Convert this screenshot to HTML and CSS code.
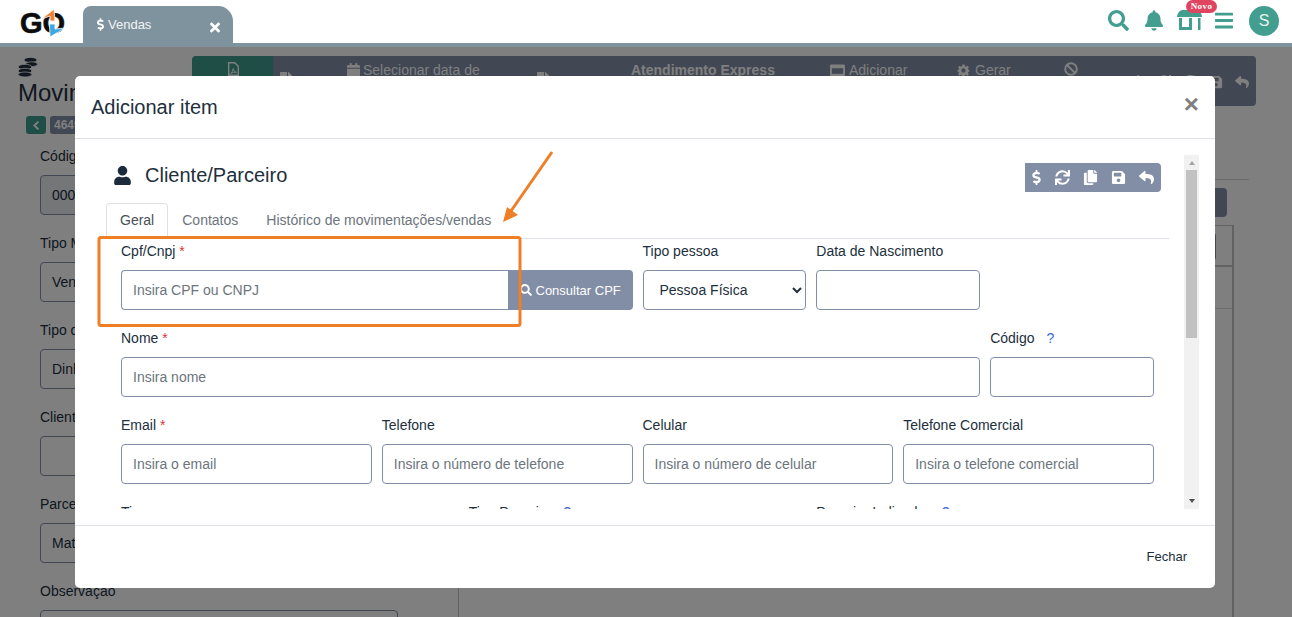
FILE: index.html
```html
<!DOCTYPE html>
<html lang="pt-BR">
<head>
<meta charset="utf-8">
<title>Vendas</title>
<link rel="stylesheet" href="styles.css">
</head>
<body>
<svg class="defs" width="0" height="0" aria-hidden="true">
  <symbol id="i-search" viewBox="0 0 512 512"><path d="M505 442.7L405.3 343c-4.5-4.5-10.6-7-17-7H372c27.6-35.3 44-79.7 44-128C416 93.1 322.9 0 208 0S0 93.1 0 208s93.1 208 208 208c48.3 0 92.7-16.4 128-44v16.3c0 6.4 2.5 12.5 7 17l99.7 99.7c9.4 9.4 24.6 9.4 33.9 0l28.3-28.3c9.4-9.4 9.4-24.6.1-34zM208 336c-70.7 0-128-57.2-128-128 0-70.7 57.2-128 128-128 70.7 0 128 57.2 128 128 0 70.7-57.2 128-128 128z"/></symbol>
  <symbol id="i-bell" viewBox="0 0 448 512"><path d="M224 512c35.32 0 63.97-28.65 63.97-64H160.03c0 35.35 28.65 64 63.97 64zm215.39-149.71c-19.32-20.76-55.47-51.99-55.47-154.29 0-77.7-54.48-139.9-127.94-155.16V32c0-17.67-14.32-32-31.98-32s-31.98 14.33-31.98 32v20.84C118.56 68.1 64.08 130.3 64.08 208c0 102.3-36.15 133.53-55.47 154.29-6 6.45-8.66 14.16-8.61 21.71.11 16.4 12.98 32 32.1 32h383.8c19.12 0 32-15.6 32.1-32 .05-7.55-2.61-15.27-8.61-21.71z"/></symbol>
  <symbol id="i-user" viewBox="0 0 448 512"><path d="M224 256c70.7 0 128-57.3 128-128S294.7 0 224 0 96 57.3 96 128s57.3 128 128 128zm89.6 32h-16.7c-22.2 10.2-46.9 16-72.9 16s-50.6-5.8-72.9-16h-16.7C60.2 288 0 348.2 0 422.4V464c0 26.5 21.5 48 48 48h352c26.5 0 48-21.5 48-48v-41.6c0-74.2-60.2-134.4-134.4-134.4z"/></symbol>
  <symbol id="i-times" viewBox="0 0 352 512"><path d="M242.72 256l100.07-100.07c12.28-12.28 12.28-32.19 0-44.48l-22.24-22.24c-12.28-12.28-32.19-12.28-44.48 0L176 189.28 75.93 89.21c-12.28-12.28-32.19-12.28-44.48 0L9.21 111.45c-12.28 12.28-12.28 32.19 0 44.48L109.28 256 9.21 356.07c-12.28 12.28-12.28 32.19 0 44.48l22.24 22.24c12.28 12.28 32.2 12.28 44.48 0L176 322.72l100.07 100.07c12.28 12.28 32.2 12.28 44.48 0l22.24-22.24c12.28-12.28 12.28-32.19 0-44.48L242.72 256z"/></symbol>
  <symbol id="i-sync" viewBox="0 0 512 512"><path d="M440.65 12.57l4 82.77A247.16 247.16 0 0 0 255.83 8C134.73 8 33.91 94.92 12.29 209.82A12 12 0 0 0 24.09 224h49.05a12 12 0 0 0 11.67-9.26 175.91 175.91 0 0 1 317-56.94l-101.46-4.86a12 12 0 0 0-12.57 12v47.41a12 12 0 0 0 12 12H500a12 12 0 0 0 12-12V12a12 12 0 0 0-12-12h-47.37a12 12 0 0 0-11.98 12.57zM255.83 432a175.61 175.61 0 0 1-146-77.8l101.8 4.87a12 12 0 0 0 12.57-12v-47.4a12 12 0 0 0-12-12H12a12 12 0 0 0-12 12V500a12 12 0 0 0 12 12h47.35a12 12 0 0 0 12-12.6l-4.15-82.57A247.17 247.17 0 0 0 255.83 504c121.11 0 221.93-86.92 243.55-201.82a12 12 0 0 0-11.8-14.18h-49.05a12 12 0 0 0-11.67 9.26A175.86 175.86 0 0 1 255.83 432z"/></symbol>
  <symbol id="i-copy" viewBox="0 0 448 512"><path d="M320 448v40c0 13.255-10.745 24-24 24H24c-13.255 0-24-10.745-24-24V120c0-13.255 10.745-24 24-24h72v296c0 30.879 25.121 56 56 56h168zm0-344V0H152c-13.255 0-24 10.745-24 24v368c0 13.255 10.745 24 24 24h272c13.255 0 24-10.745 24-24V128H344c-13.2 0-24-10.8-24-24zm120.971-31.029L375.029 7.029A24 24 0 0 0 358.059 0H352v96h96v-6.059a24 24 0 0 0-7.029-16.97z"/></symbol>
  <symbol id="i-save" viewBox="0 0 448 512"><path d="M433.941 129.941l-83.882-83.882A48 48 0 0 0 316.118 32H48C21.49 32 0 53.49 0 80v352c0 26.51 21.49 48 48 48h352c26.51 0 48-21.49 48-48V163.882a48 48 0 0 0-14.059-33.941zM224 416c-35.346 0-64-28.654-64-64 0-35.346 28.654-64 64-64s64 28.654 64 64c0 35.346-28.654 64-64 64zm96-304.52V212c0 6.627-5.373 12-12 12H76c-6.627 0-12-5.373-12-12V108c0-6.627 5.373-12 12-12h228.52c3.183 0 6.235 1.264 8.485 3.515l3.48 3.48A11.996 11.996 0 0 1 320 111.48z"/></symbol>
  <symbol id="i-reply" viewBox="0 0 512 512"><path d="M8.309 189.836L184.313 37.851C199.719 24.546 224 35.347 224 56.015v80.053c160.629 1.839 288 34.032 288 186.258 0 61.441-39.581 122.309-83.333 154.132-13.653 9.931-33.111-2.533-28.077-18.631 45.344-145.012-21.507-183.51-176.59-185.742V360c0 20.7-24.3 31.453-39.687 18.164l-176.004-152c-11.071-9.562-11.086-26.753 0-36.328z"/></symbol>
  <symbol id="i-dollar" viewBox="0 0 288 512"><path d="M209.2 233.4l-108-31.6C88.7 198.2 80 186.5 80 173.5c0-16.3 13.2-29.5 29.5-29.5h66.3c12.2 0 24.2 3.7 34.2 10.5 6.1 4.1 14.3 3.1 19.5-2l34.8-34c7.1-6.9 6.1-18.4-1.8-24.5C238 74.8 207.4 64.1 176 64V16c0-8.8-7.2-16-16-16h-32c-8.8 0-16 7.2-16 16v48h-2.5C45.8 64-5.4 118.7.5 183.6c4.2 46.1 39.4 83.6 83.8 96.6l102.5 30c12.5 3.7 21.2 15.3 21.2 28.3 0 16.3-13.2 29.5-29.5 29.5h-66.3C100 368 88 364.3 78 357.5c-6.1-4.1-14.3-3.1-19.5 2l-34.8 34c-7.1 6.9-6.1 18.4 1.8 24.5 24.5 19.2 55.1 29.9 86.5 30v48c0 8.8 7.2 16 16 16h32c8.8 0 16-7.2 16-16v-48.2c46.6-.9 90.3-28.6 105.7-72.7 21.5-61.6-14.6-124.8-72.5-141.7z"/></symbol>
  <symbol id="i-bars" viewBox="0 0 448 512"><path d="M16 132h416c8.837 0 16-7.163 16-16V76c0-8.837-7.163-16-16-16H16C7.163 60 0 67.163 0 76v40c0 8.837 7.163 16 16 16zm0 160h416c8.837 0 16-7.163 16-16v-40c0-8.837-7.163-16-16-16H16c-8.837 0-16 7.163-16 16v40c0 8.837 7.163 16 16 16zm0 160h416c8.837 0 16-7.163 16-16v-40c0-8.837-7.163-16-16-16H16c-8.837 0-16 7.163-16 16v40c0 8.837 7.163 16 16 16z"/></symbol>
  <symbol id="i-file" viewBox="0 0 384 512"><path d="M224 136V0H24C10.700 0 0 10.700 0 24v464c0 13.300 10.700 24 24 24h336c13.300 0 24-10.700 24-24V160H248c-13.200 0-24-10.800-24-24zM384 121.900V128H256V0h6.100c6.400 0 12.500 2.500 17 7l97.900 98c4.500 4.500 7 10.600 7 16.900z"/></symbol>
  <symbol id="i-calendar" viewBox="0 0 448 512"><path d="M0 464c0 26.500 21.500 48 48 48h352c26.500 0 48-21.500 48-48V192H0v272zM400 64h-48V16c0-8.800-7.200-16-16-16h-32c-8.800 0-16 7.200-16 16v48H160V16c0-8.800-7.200-16-16-16h-32c-8.800 0-16 7.200-16 16v48H48C21.500 64 0 85.500 0 112v48h448v-48c0-26.500-21.500-48-48-48z"/></symbol>
  <symbol id="i-window" viewBox="0 0 512 512"><path d="M464 48H48C21.500 48 0 69.500 0 96v320c0 26.500 21.500 48 48 48h416c26.500 0 48-21.500 48-48V96c0-26.500-21.500-48-48-48zM448 176v192H64V176h384z" fill-rule="evenodd"/></symbol>
  <symbol id="i-cog" viewBox="0 0 24 24"><path d="M10 1h4l.6 3.200 1.900.8L19.200 3.200 22 6l-1.800 2.700.8 1.900L23 11v3l-2 .6-.8 1.900L22 19l-2.800 2.800-2.700-1.800-1.900.8L14 23h-4l-.6-2.200-1.900-.8L4.800 21.800 2 19l1.800-2.500-.8-1.900L1 14v-3l2-.4.8-1.900L2 6l2.800-2.800L7.500 5l1.900-.8L10 1zm2 7a4 4 0 1 0 0 8 4 4 0 0 0 0-8z" fill-rule="evenodd"/></symbol>
</svg>

<header class="topbar">
  <div class="logo">
    <span class="logo-text">GO</span>
    <svg class="logo-marks" viewBox="0 0 46 30" width="46" height="30" aria-hidden="true">
      <polygon class="mark-orange" points="22,10 34,0 35,12 30,12 30,7"/>
      <polygon class="mark-blue" points="29.500,15 35,15 35,20 45,19 30,28"/>
    </svg>
  </div>
  <nav class="tab-strip">
    <div class="app-tab">
      <svg class="ic ic-tab-dollar"><use href="#i-dollar"/></svg>
      <span class="app-tab-label">Vendas</span>
      <svg class="ic ic-tab-close"><use href="#i-times"/></svg>
    </div>
  </nav>
  <div class="top-actions">
    <svg class="ic ic-search"><use href="#i-search"/></svg>
    <svg class="ic ic-bell"><use href="#i-bell"/></svg>
    <div class="store">
      <svg class="store-icon" viewBox="0 0 25 21" width="25" height="21" aria-hidden="true">
        <path class="store-fill" d="M5 0h15c3 1 5 4 5 7H0c0-3 2-6 5-7z"/>
        <path class="store-fill" d="M2 8h3v9h7V8h3v12H2z"/>
        <rect class="store-fill" x="21" y="8" width="2.500" height="12"/>
      </svg>
      <span class="store-badge">Novo</span>
    </div>
    <svg class="ic ic-bars"><use href="#i-bars"/></svg>
    <span class="avatar">S</span>
  </div>
</header>
<div class="top-stripe"></div>

<main class="page">
  <div class="page-head">
    <div class="title-block">
      <svg class="coins" viewBox="0 0 20 20" width="20" height="20" aria-hidden="true">
        <ellipse class="coin" cx="12.500" cy="3" rx="6.500" ry="2.600"/>
        <ellipse class="coin" cx="13.500" cy="7.200" rx="6" ry="2.400"/>
        <ellipse class="coin" cx="7" cy="10" rx="6.800" ry="2.700"/>
        <ellipse class="coin" cx="7" cy="14" rx="6.800" ry="2.700"/>
        <ellipse class="coin" cx="7" cy="17.500" rx="6.800" ry="2.500"/>
      </svg>
      <h1 class="page-title">Movimentações</h1>
      <div class="crumbs">
        <span class="back-btn">
          <svg class="chev" viewBox="0 0 10 14" width="8" height="11" aria-hidden="true"><polyline points="8,2 3,7 8,12"/></svg>
        </span>
        <span class="crumb-badge">4649</span>
      </div>
    </div>
    <div class="toolbar">
      <div class="tb-green">
        <svg class="pdf" viewBox="0 0 11 14" width="11" height="14" aria-hidden="true">
          <path class="pdf-page" d="M.7.7h6l3.600 3.600v9H.7z"/>
          <path class="pdf-mark" d="M2.500 11.500C4 10.500 5 8.500 5.200 6.500 5.500 8.500 6.500 9.800 8.500 10.300 6.500 10 4 10.500 2.500 11.500z"/>
        </svg>
      </div>
      <div class="tb-item tb-file"><svg class="ic ic-low"><use href="#i-file"/></svg></div>
      <div class="tb-item tb-date"><svg class="ic ic-cal"><use href="#i-calendar"/></svg><span class="tb-wrap">Selecionar data de venda</span></div>
      <div class="tb-item tb-print"><svg class="ic ic-low"><use href="#i-file"/></svg></div>
      <div class="tb-item tb-express"><strong>Atendimento Express</strong></div>
      <div class="tb-item tb-add"><svg class="ic ic-win"><use href="#i-window"/></svg><span>Adicionar</span></div>
      <div class="tb-item tb-gen"><svg class="ic ic-cal"><use href="#i-cog"/></svg><span>Gerar</span></div>
      <div class="tb-item tb-ban">
        <svg class="ban" viewBox="0 0 14 14" width="14" height="14" aria-hidden="true"><circle cx="7" cy="7" r="5.800"/><line x1="3" y1="3" x2="11" y2="11"/></svg>
      </div>
      <div class="tb-right">
        <svg class="ic ic-tb"><use href="#i-dollar"/></svg>
        <svg class="ic ic-tb"><use href="#i-sync"/></svg>
        <svg class="ic ic-tb"><use href="#i-copy"/></svg>
        <svg class="ic ic-tb"><use href="#i-save"/></svg>
        <svg class="ic ic-tb"><use href="#i-reply"/></svg>
      </div>
    </div>
  </div>

  <div class="page-main">
    <div class="left-col">
      <div class="bg-field"><div class="bg-label">Código</div><div class="bg-input bg-disabled">0004649</div></div>
      <div class="bg-field"><div class="bg-label">Tipo Movimentação</div><div class="bg-input">Venda</div></div>
      <div class="bg-field"><div class="bg-label">Tipo de pagamento</div><div class="bg-input">Dinheiro</div></div>
      <div class="bg-field"><div class="bg-label">Cliente</div><div class="bg-input"></div></div>
      <div class="bg-field"><div class="bg-label">Parceiro</div><div class="bg-input">Matriz</div></div>
      <div class="bg-field"><div class="bg-label">Observação</div><div class="bg-input bg-text"></div></div>
    </div>
    <div class="right-col">
      <div class="bg-rule"></div>
      <div class="bg-btn-row"><span class="bg-btn"></span></div>
      <div class="bg-table">
        <div class="bg-row bg-row-head"><span class="bg-cell-btn"></span></div>
        <div class="bg-row bg-row-body"></div>
        <div class="bg-row-rest"></div>
      </div>
    </div>
  </div>
</main>

<div class="overlay">
  <section class="modal">
    <div class="modal-head">
      <h2 class="modal-title">Adicionar item</h2>
      <span class="modal-close">×</span>
    </div>
    <div class="modal-body">
      <div class="scroller">
        <div class="scroll-view">
          <div class="scroll-inner">
            <div class="card-head">
              <svg class="ic ic-user"><use href="#i-user"/></svg>
              <h3 class="card-title">Cliente/Parceiro</h3>
              <div class="card-tools">
                <svg class="ic ic-tool ic-tool-d"><use href="#i-dollar"/></svg>
                <svg class="ic ic-tool"><use href="#i-sync"/></svg>
                <svg class="ic ic-tool"><use href="#i-copy"/></svg>
                <svg class="ic ic-tool"><use href="#i-save"/></svg>
                <svg class="ic ic-tool"><use href="#i-reply"/></svg>
              </div>
            </div>
            <div class="tabs">
              <span class="tab tab-active">Geral</span>
              <span class="tab">Contatos</span>
              <span class="tab">Histórico de movimentações/vendas</span>
            </div>
            <form class="form-grid">
              <div class="field span-6">
                <label class="label">Cpf/Cnpj <b class="req">*</b></label>
                <div class="input-group">
                  <input class="input input-joined" placeholder="Insira CPF ou CNPJ">
                  <button type="button" class="btn-consult"><svg class="ic ic-btn"><use href="#i-search"/></svg>Consultar CPF</button>
                </div>
              </div>
              <div class="field span-2">
                <label class="label">Tipo pessoa</label>
                <select class="input select"><option>Pessoa Física</option></select>
              </div>
              <div class="field span-2">
                <label class="label">Data de Nascimento</label>
                <input class="input">
              </div>
              <div class="field span-2"></div>

              <div class="field span-10">
                <label class="label">Nome <b class="req">*</b></label>
                <input class="input" placeholder="Insira nome">
              </div>
              <div class="field span-2">
                <label class="label">Código <span class="help">?</span></label>
                <input class="input">
              </div>

              <div class="field span-3">
                <label class="label">Email <b class="req">*</b></label>
                <input class="input" placeholder="Insira o email">
              </div>
              <div class="field span-3">
                <label class="label">Telefone</label>
                <input class="input" placeholder="Insira o número de telefone">
              </div>
              <div class="field span-3">
                <label class="label">Celular</label>
                <input class="input" placeholder="Insira o número de celular">
              </div>
              <div class="field span-3">
                <label class="label">Telefone Comercial</label>
                <input class="input" placeholder="Insira o telefone comercial">
              </div>

              <div class="field span-4">
                <label class="label">Tipo</label>
                <input class="input">
              </div>
              <div class="field span-4">
                <label class="label">Tipo Parceiro <span class="help">?</span></label>
                <input class="input">
              </div>
              <div class="field span-4">
                <label class="label">Parceiro Indicador <span class="help">?</span></label>
                <input class="input">
              </div>
            </form>
          </div>
        </div>
        <div class="scrollbar">
          <span class="sb-up"></span>
          <span class="sb-thumb"></span>
          <span class="sb-down"></span>
        </div>
      </div>
    </div>
    <div class="modal-foot"><span class="foot-btn">Fechar</span></div>
  </section>
</div>

<svg class="annotation" viewBox="0 0 1292 617" width="1292" height="617" aria-hidden="true">
  <rect class="anno-box" x="99" y="237.500" width="421" height="88" rx="2"/>
  <line class="anno-line" x1="552" y1="152" x2="511" y2="211"/>
  <polygon class="anno-head" points="503,222 507,207 518,215"/>
</svg>
</body>
</html>
```
FILE: styles.css
```css
* { box-sizing: border-box; }
html, body { margin: 0; height: 100%; overflow: hidden; }
body {
  font-family: "Liberation Sans", Arial, sans-serif;
  font-size: 14px;
  line-height: 21px;
  color: #212f3d;
  background: #fff;
  position: relative;
}
.defs { position: absolute; }
.ic { display: block; fill: currentColor; flex: none; }

/* top bar */
.topbar {
  height: 43px;
  display: flex;
  align-items: flex-start;
  background: #fff;
  position: relative;
  z-index: 3;
}
.logo { width: 83px; height: 43px; padding: 9px 0 0 20px; position: relative; }
.logo-text {
  display: block;
  font-size: 29px;
  line-height: 28px;
  font-weight: 700;
  color: #0c0c0c;
  -webkit-text-stroke: .6px #0c0c0c;
}
.logo-marks { position: absolute; left: 20px; top: 9px; }
.mark-orange { fill: #ee7f33; stroke: #fff; stroke-width: .8; }
.mark-blue { fill: #3ca7e0; stroke: #fff; stroke-width: .8; }
.tab-strip { margin-top: 6px; }
.app-tab {
  width: 150px;
  height: 37px;
  background: #7f939e;
  border-radius: 8px 15px 0 0;
  color: #f1f4f6;
  display: flex;
  align-items: center;
  font-size: 13px;
  padding: 0 13px 0 14px;
}
.ic-tab-dollar { width: 7px; height: 13px; color: #fff; margin-right: 4px; }
.app-tab-label { flex: 1; }
.ic-tab-close { width: 10px; height: 15px; color: #fff; margin-top: 5px; }
.top-actions {
  margin-left: auto;
  display: flex;
  align-items: flex-start;
  padding-right: 13px;
}
.ic-search { width: 21px; height: 21px; color: #429e8f; margin: 10px 16px 0 0; }
.ic-bell { width: 18px; height: 21px; color: #429e8f; margin: 10px 14px 0 0; }
.store { width: 38px; height: 43px; position: relative; }
.store-icon { position: absolute; left: 0; top: 10px; }
.store-fill { fill: #429e8f; }
.store-badge {
  position: absolute;
  left: 9px;
  top: 0;
  width: 31px;
  height: 13px;
  border-radius: 7px;
  background: #e0455f;
  color: #fff;
  font-family: "Liberation Serif", serif;
  font-size: 9px;
  font-weight: 700;
  line-height: 12px;
  letter-spacing: .4px;
  text-align: center;
}
.ic-bars { width: 18px; height: 21px; color: #429e8f; margin: 10px 16px 0 0; }
.avatar {
  width: 30px;
  height: 30px;
  margin-top: 6px;
  border-radius: 50%;
  background: #429e8f;
  color: #e8f3f1;
  font-size: 16px;
  line-height: 30px;
  text-align: center;
}
.top-stripe { height: 4px; background: #7f939e; position: relative; z-index: 3; }

/* page behind the dialog */
.page { height: 570px; overflow: hidden; }
.page-head { display: flex; align-items: flex-start; padding: 9px 36px 0 18px; height: 87px; }
.title-block { width: 174px; flex: none; padding-top: 1px; }
.coins { display: block; }
.coin { fill: #212f3d; stroke: #fff; stroke-width: .8; }
.page-title { margin: 1px 0 0; font-size: 24px; line-height: 29px; font-weight: 400; white-space: nowrap; }
.crumbs { display: flex; gap: 4px; padding: 9px 0 0 8px; }
.back-btn {
  width: 20px; height: 18px; border-radius: 3px; background: #3e9c8f;
  display: flex; align-items: center; justify-content: center;
}
.chev { fill: none; stroke: #fff; stroke-width: 2.500; }
.crumb-badge {
  width: 60px; height: 18px; border-radius: 3px; background: #828ea6;
  color: #fff; font-size: 12px; font-weight: 700; line-height: 18px; padding-left: 4px;
}
.toolbar {
  flex: 1;
  height: 50px;
  background: #828ea6;
  border-radius: 4px;
  display: flex;
  overflow: hidden;
  color: #fff;
}
.tb-green { width: 81px; background: #3e9c8f; padding: 6px 0 0 36px; border-radius: 4px 0 0 4px; }
.pdf { display: block; }
.pdf-page { fill: none; stroke: #fff; stroke-width: 1.400; }
.pdf-mark { fill: none; stroke: #fff; stroke-width: 1; }
.tb-item { display: flex; gap: 4px; padding-top: 4px; white-space: nowrap; }
.ic-cal { width: 13px; height: 15px; margin-top: 3px; }
.ic-win { width: 15px; height: 15px; margin-top: 3px; }
.ic-low { width: 12px; height: 16px; margin-top: 12px; }
.tb-wrap { white-space: normal; width: 122px; }
.tb-file { width: 74px; padding-left: 7px; }
.tb-date { width: 190px; gap: 3px; }
.tb-print { width: 94px; }
.tb-express { width: 199px; }
.tb-add { width: 127px; }
.tb-gen { width: 107px; gap: 5px; }
.tb-ban { width: 60px; padding-top: 6px; }
.ban { fill: none; stroke: #fff; stroke-width: 2; }
.tb-right { flex: 1; display: flex; justify-content: flex-end; gap: 12px; padding: 19px 7px 0 0; }
.ic-tb { width: 14px; height: 14px; }

.page-main { display: flex; padding: 0 0 0 40px; }
.left-col { width: 358px; flex: none; padding-top: 12px; display: flex; flex-direction: column; gap: 18px; }
.bg-label { margin-bottom: 8px; white-space: nowrap; }
.bg-input {
  height: 40px;
  border: 1px solid #828ea6;
  border-radius: 4px;
  background: #fff;
  padding: 0 11px;
  line-height: 38px;
}
.bg-disabled { background: #e9ecef; }
.bg-text { height: 80px; }
.right-col { width: 776px; flex: none; margin-left: 60px; padding-top: 45px; }
.bg-rule { height: 1px; background: #d6d6d6; margin-right: -15px; }
.bg-btn-row { display: flex; justify-content: flex-end; padding: 8px 7px 8px 0; }
.bg-btn { width: 80px; height: 29px; background: #828ea6; border-radius: 4px; }
.bg-table { border: 2px solid #c4c4c4; border-width: 1px 2px 0 1px; height: 500px; }
.bg-row { height: 41px; border-bottom: 2px solid #c4c4c4; display: flex; justify-content: flex-end; }
.bg-row-body { height: 42px; border-bottom: 1px solid #dcdcdc; }
.bg-cell-btn { width: 60px; height: 27px; margin: 7px 16px 0 0; background: #828ea6; border-radius: 3px; }

/* dialog */
.overlay {
  position: absolute;
  left: 0; right: 0; top: 47px; bottom: 0;
  background: rgba(0, 0, 0, .5);
  padding: 29px 0 0 75px;
  z-index: 2;
}
.modal {
  width: 1140px;
  height: 512px;
  background: #fff;
  border-radius: 5px;
  display: flex;
  flex-direction: column;
}
.modal-head {
  height: 63px;
  flex: none;
  border-bottom: 1px solid #dee2e6;
  display: flex;
  align-items: center;
  justify-content: space-between;
  padding: 0 16px 0 16px;
}
.modal-title { margin: 0 0 1px; font-size: 20px; line-height: 30px; font-weight: 400; color: #212f3d; }
.modal-close { font-size: 26px; line-height: 26px; font-weight: 700; color: #7f7f7f; margin-bottom: 7px; }
.modal-body { height: 386px; flex: none; padding: 16px; }
.scroller { height: 354px; display: flex; }
.scroll-view { flex: 1; min-width: 0; overflow: hidden; }
.scroll-inner { padding: 8px 15px 0; }
.scrollbar {
  width: 15px;
  flex: none;
  background: #f1f1f1;
  display: flex;
  flex-direction: column;
  align-items: center;
}
.sb-up {
  margin-top: 6px;
  border-style: solid;
  border-width: 0 3.5px 4px;
  border-color: transparent transparent #a3a3a3;
}
.sb-thumb { width: 11px; height: 168px; margin-top: 5px; background: #c1c1c1; }
.sb-down {
  margin-top: auto;
  margin-bottom: 6px;
  border-style: solid;
  border-width: 4px 3.5px 0;
  border-color: #505050 transparent transparent;
}
.card-head { display: flex; align-items: center; height: 29px; padding-left: 8px; }
.ic-user { width: 17px; height: 19px; color: #1c2b39; margin: -5px 14px 0 0; }
.card-title { margin: -5px 0 0; font-size: 20px; line-height: 24px; font-weight: 400; flex: 1; }
.card-tools {
  width: 136px;
  height: 29px;
  margin-right: 8px;
  background: #828ea6;
  border-radius: 0 4px 4px 0;
  display: flex;
  align-items: center;
  gap: 13px;
  padding-left: 4px;
  color: #fff;
}
.ic-tool { width: 15px; height: 15px; }
.ic-tool-d { margin-right: -2px; }
.tabs { display: flex; margin-top: 11px; height: 36px; border-bottom: 1px solid #dee2e6; }
.tab { padding: 6px 13px 0; height: 36px; border: 1px solid transparent; color: #6c757d; white-space: nowrap; }
.tab-active { color: #495057; background: #fff; border-color: #dee2e6 #dee2e6 #fff; border-radius: 4px 4px 0 0; }

.form-grid {
  display: grid;
  grid-template-columns: repeat(12, 1fr);
  column-gap: 10px;
  row-gap: 18px;
  padding: 2px 15px 0;
}
.span-2 { grid-column: span 2; }
.span-3 { grid-column: span 3; }
.span-4 { grid-column: span 4; }
.span-6 { grid-column: span 6; }
.span-10 { grid-column: span 10; }
.label { display: block; margin-bottom: 8px; height: 21px; color: #212f3d; }
.req { color: #dc3545; font-weight: 400; }
.help { color: #3f6ad8; margin-left: 8px; }
.input {
  display: block;
  width: 100%;
  height: 40px;
  border: 1px solid #828ea6;
  border-radius: 4px;
  background: #fff;
  padding: 0 11px;
  font: 14px "Liberation Sans", Arial, sans-serif;
  color: #212f3d;
  outline: none;
}
.input::placeholder { color: #6c757d; opacity: 1; }
.select { padding: 0 0 0 12px; }
.input-group { display: flex; }
.input-joined { flex: 1; min-width: 0; border-radius: 4px 0 0 4px; border-right: 0; }
.btn-consult {
  width: 125px;
  height: 40px;
  flex: none;
  border: 0;
  background: #828ea6;
  border-radius: 0 4px 4px 0;
  color: #fff;
  font: 13px "Liberation Sans", Arial, sans-serif;
  display: flex;
  align-items: center;
  padding: 0 0 0 12px;
  gap: 4px;
}
.ic-btn { width: 12px; height: 12px; }
.modal-foot {
  flex: 1;
  border-top: 1px solid #dee2e6;
  display: flex;
  align-items: center;
  justify-content: flex-end;
  padding: 0 28px 2px 0;
}
.foot-btn { font-size: 13px; color: #212f3d; }

/* orange annotation */
.annotation { position: absolute; left: 0; top: 0; z-index: 4; pointer-events: none; }
.anno-box { fill: none; stroke: #ee7f26; stroke-width: 3; }
.anno-line { stroke: #ee7f26; stroke-width: 3; }
.anno-head { fill: #ee7f26; }
```
